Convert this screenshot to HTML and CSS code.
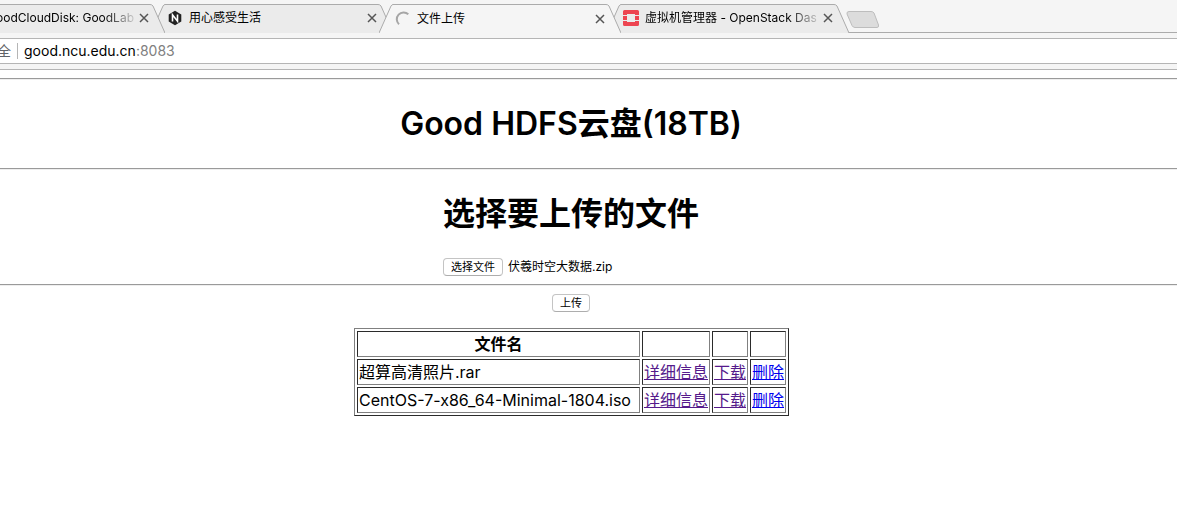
FILE: index.html
```html
<!DOCTYPE html>
<html lang="zh-CN">
<head>
<meta charset="utf-8">
<title>文件上传</title>
<link rel="stylesheet" href="styles.css">
</head>
<body>
<header class="browser">
  <nav class="tabs" aria-label="标签页">
    <div class="tab tab-first">
      <svg class="tab-shape" viewBox="0 0 242 29"><path d="M0 29 L12 2 Q13 .5 14 .5 H227 Q229 .5 230 2 L242 29"/></svg>
      <span class="tab-icon"></span>
      <span class="tab-title fade">GoodCloudDisk: GoodLab</span>
      <button class="tab-close" aria-label="关闭"><svg viewBox="0 0 10 10"><path d="M1 1 9 9M9 1 1 9"/></svg></button>
    </div>
    <div class="tab tab-second">
      <svg class="tab-shape" viewBox="0 0 242 29"><path d="M0 29 L12 2 Q13 .5 14 .5 H227 Q229 .5 230 2 L242 29"/></svg>
      <svg class="tab-icon" viewBox="0 0 16 16"><path fill="#222" d="M8 .8 14.3 4.4V11.6L8 15.2 1.7 11.6V4.4Z"/><path fill="none" stroke="#fff" stroke-width="1.6" d="M5.5 11.5V4.8L10.5 11.2V4.5"/></svg>
      <span class="tab-title">用心感受生活</span>
      <button class="tab-close" aria-label="关闭"><svg viewBox="0 0 10 10"><path d="M1 1 9 9M9 1 1 9"/></svg></button>
    </div>
    <div class="tab tab-active">
      <svg class="tab-shape" viewBox="0 0 242 29"><path d="M0 29 L12 2 Q13 .5 14 .5 H227 Q229 .5 230 2 L242 29"/></svg>
      <svg class="tab-icon" viewBox="0 0 16 16"><path fill="none" stroke="#a6a6a6" stroke-width="2" d="M13.300 3.200A6.500 6.500 0 0 0 4 13.300"/></svg>
      <span class="tab-title">文件上传</span>
      <button class="tab-close" aria-label="关闭"><svg viewBox="0 0 10 10"><path d="M1 1 9 9M9 1 1 9"/></svg></button>
    </div>
    <div class="tab">
      <svg class="tab-shape" viewBox="0 0 242 29"><path d="M0 29 L12 2 Q13 .5 14 .5 H227 Q229 .5 230 2 L242 29"/></svg>
      <svg class="tab-icon" viewBox="0 0 16 16"><g fill="#ed4551"><path d="M1.5 0H14.5Q16 0 16 1.5V5H12V4H4V5H0V1.5Q0 0 1.5 0Z"/><path d="M0 6H4V10H0ZM12 6H16V10H12Z"/><path d="M0 11H4V12H12V11H16V14.5Q16 16 14.5 16H1.5Q0 16 0 14.5Z"/></g></svg>
      <span class="tab-title fade">虚拟机管理器 - OpenStack Das</span>
      <button class="tab-close" aria-label="关闭"><svg viewBox="0 0 10 10"><path d="M1 1 9 9M9 1 1 9"/></svg></button>
    </div>
    <button class="new-tab" aria-label="新标签页"><svg viewBox="0 0 34 17"><path d="M3 .5H25Q27 .5 28 2L32.500 14Q33 16.500 31 16.500H9Q7 16.500 6 14.500L1 3Q.5 .5 3 .5Z"/></svg></button>
  </nav>
  <div class="toolbar">
    <div class="address"><span class="security">全</span><span class="url">good.ncu.edu.cn<span class="port">:8083</span></span></div>
  </div>
</header>
<main class="page">
  <hr>
  <h1>Good HDFS云盘(18TB)</h1>
  <hr>
  <form>
    <div class="upload">
      <h1>选择要上传的文件</h1>
      <div class="picker">
        <input class="file-input" type="file" id="file">
        <label class="button" for="file">选择文件</label>
        <span>伏羲时空大数据.zip</span>
      </div>
    </div>
    <hr>
    <div class="submit"><button class="button" type="submit">上传</button></div>
  </form>
  <div class="files">
    <table>
      <thead>
        <tr><th class="name">文件名</th><th></th><th></th><th></th></tr>
      </thead>
      <tbody>
        <tr><td>超算高清照片.rar</td><td><a class="visited" href="#detail-1">详细信息</a></td><td><a class="visited" href="#download-1">下载</a></td><td><a href="#delete-1">删除</a></td></tr>
        <tr><td>CentOS-7-x86_64-Minimal-1804.iso</td><td><a class="visited" href="#detail-2">详细信息</a></td><td><a class="visited" href="#download-2">下载</a></td><td><a href="#delete-2">删除</a></td></tr>
      </tbody>
    </table>
  </div>
</main>
</body>
</html>
```
FILE: styles.css
```css
* { box-sizing: border-box; }
body {
  margin: 0;
  background: #fff;
  color: #000;
  font: 16px/22px Inter, "Noto Sans CJK SC", sans-serif;
}
button { font-family: inherit; padding: 0; }

/* Browser chrome */
.browser { background: #f5f5f5; overflow: hidden; }
.tabs {
  display: flex;
  padding-top: 4px;
  margin-left: -77px;
  border-bottom: 1px solid #ababab;
  height: 33px;
}
.tab {
  position: relative;
  isolation: isolate;
  display: flex;
  align-items: center;
  flex: 0 0 242px;
  height: 29px;
  padding-left: 16px;
  font-size: 12px;
}
.tab + .tab { margin-left: -14px; }
.tab-first { z-index: 3; }
.tab-second { z-index: 2; }
.tab-active { z-index: 4; }
.tab-shape { position: absolute; inset: 0; width: 100%; height: 29px; z-index: -1; fill: #ebebeb; stroke: #ababab; }
.tab:not(.tab-active) { border-bottom: 1px solid #ababab; }
.tab-active .tab-shape { fill: #f5f5f5; }
.tab-icon { flex: none; width: 16px; height: 16px; }
.tab-title { width: 173px; margin-left: 6px; overflow: hidden; white-space: nowrap; }
.tab-first .tab-title { text-align: right; }
.fade { -webkit-mask-image: linear-gradient(to right, #000 142px, transparent 178px); mask-image: linear-gradient(to right, #000 142px, transparent 178px); }
.tab-close { display: flex; margin-left: 5px; border: 0; background: none; }
.tab-close svg { width: 10px; height: 10px; fill: none; stroke: #555; stroke-width: 1.5; }
.new-tab { height: 17px; margin: 7px 0 0 -3px; border: 0; background: none; }
.new-tab svg { display: block; width: 34px; height: 17px; fill: #dcdcdc; stroke: #bdbdbd; }
.toolbar { padding: 5px 0; border-bottom: 1px solid #b5b5b5; }
.address {
  display: flex;
  align-items: center;
  height: 26px;
  background: #fff;
  border: solid #b5b5b5;
  border-width: 1px 0;
  font-size: 14px;
}
.security { width: 21px; line-height: 16px; margin-left: -3px; border-right: 1px solid #b5b5b5; color: #5f6368; }
.url { margin-left: 6px; }
.port { color: #808080; }

/* Page content */
.page { padding: 8px 0; }
hr { height: 2px; margin: 0; border: solid; border-color: #9a9a9a #eee #eee; border-width: 1px 0; }
h1 { margin: 21px 0; font-size: 32px; line-height: 46px; font-weight: 600; text-align: center; }
.page > h1, .upload, .submit { padding-right: 35px; }
.upload { display: grid; justify-content: center; }
.upload h1 { font-weight: 700; margin-bottom: 20px; }
.picker { position: relative; display: flex; align-items: center; gap: 5px; margin-bottom: 7px; font-size: 12px; line-height: 20px; }
.file-input { position: absolute; width: 60px; height: 18px; margin: 0; opacity: 0; }
.button {
  height: 18px;
  padding: 0 7px;
  border: 1px solid #c4c4c4;
  border-bottom-color: #adadad;
  border-radius: 4px;
  background: #fff;
  color: #000;
  font-size: 11px;
  line-height: 16px;
}
.submit { display: flex; justify-content: center; margin: 8px 0 16px; }
.files { display: flex; justify-content: center; padding-right: 34px; }
table { border: 1px solid; border-color: #808080 #2b2b2b #2b2b2b #808080; border-spacing: 2px; }
th, td { height: 26px; padding: 1px; border: 1px solid; border-color: #2b2b2b #808080 #808080 #2b2b2b; white-space: nowrap; }
th { font-weight: 600; }
.name { width: 283px; }
a { color: #00e; }
a.visited { color: #551a8b; }
```
